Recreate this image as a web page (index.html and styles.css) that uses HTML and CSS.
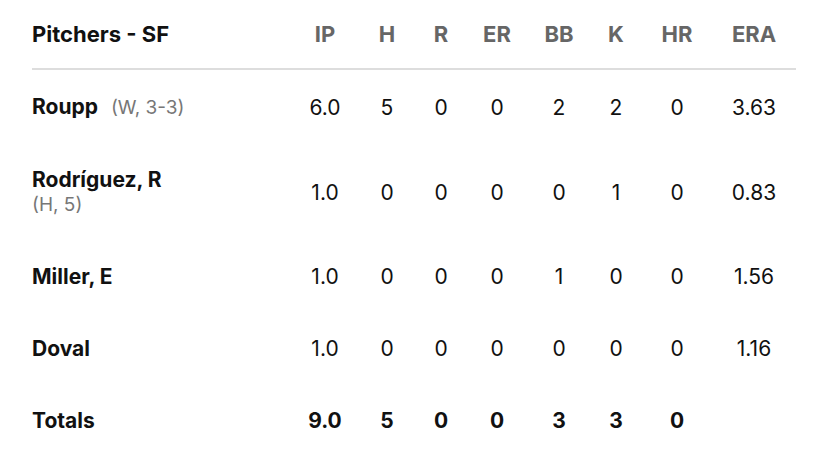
FILE: index.html
```html
<!DOCTYPE html>
<html lang="en">
<head>
<meta charset="UTF-8">
<meta name="viewport" content="width=device-width, initial-scale=1.0">
<title>Box Score - Pitchers</title>
<link rel="stylesheet" href="styles.css">
</head>
<body>

<!-- Pitching box score table -->
<div class="box">
<div class="row head">
<div class="name">Pitchers - SF</div>
<div class="stat">IP</div>
<div class="stat">H</div>
<div class="stat">R</div>
<div class="stat">ER</div>
<div class="stat">BB</div>
<div class="stat">K</div>
<div class="stat">HR</div>
<div class="stat">ERA</div>
</div>

<div class="row">
<div class="name">Roupp <span class="note">(W, 3-3)</span></div>
<div class="stat">6.0</div>
<div class="stat">5</div>
<div class="stat">0</div>
<div class="stat">0</div>
<div class="stat">2</div>
<div class="stat">2</div>
<div class="stat">0</div>
<div class="stat">3.63</div>
</div>

<div class="row">
<div class="name">Rodríguez, R<br><span class="note block">(H, 5)</span></div>
<div class="stat">1.0</div>
<div class="stat">0</div>
<div class="stat">0</div>
<div class="stat">0</div>
<div class="stat">0</div>
<div class="stat">1</div>
<div class="stat">0</div>
<div class="stat">0.83</div>
</div>

<div class="row">
<div class="name">Miller, E</div>
<div class="stat">1.0</div>
<div class="stat">0</div>
<div class="stat">0</div>
<div class="stat">0</div>
<div class="stat">1</div>
<div class="stat">0</div>
<div class="stat">0</div>
<div class="stat">1.56</div>
</div>

<div class="row">
<div class="name">Doval</div>
<div class="stat">1.0</div>
<div class="stat">0</div>
<div class="stat">0</div>
<div class="stat">0</div>
<div class="stat">0</div>
<div class="stat">0</div>
<div class="stat">0</div>
<div class="stat">1.16</div>
</div>

<div class="row totals">
<div class="name">Totals</div>
<div class="stat">9.0</div>
<div class="stat">5</div>
<div class="stat">0</div>
<div class="stat">0</div>
<div class="stat">3</div>
<div class="stat">3</div>
<div class="stat">0</div>
<div class="stat"></div>
</div>
</div>

</body>
</html>
```

FILE: styles.css
```css
/* General styling */
body {
    font-family: Inter, Lato, sans-serif;
    background: #fff;
    color: #111;
    margin: 0;
    padding: 0 32px;
}

.box {
    width: 764px;
}

/* Each line of the table is a grid with fixed stat columns */
.row {
    display: grid;
    grid-template-columns: 260px 66px 58px 50px 62px 62px 52px 70px 84px;
    align-items: center;
    padding: 25px 0 23px;
    font-size: 21px;
    line-height: 24px;
}

.name {
    font-weight: bold;
}

.stat {
    text-align: center;
}

.note {
    font-weight: normal;
    font-size: 19px;
    color: #777;
    margin-left: 8px;
}

.note.block {
    margin-left: 0;
}

/* Header row */
.head {
    padding: 22px 0 22px;
    border-bottom: 2px solid #ddd;
    font-weight: bold;
    font-size: 22px;
}

.head .stat {
    color: #666;
}

.totals {
    font-weight: bold;
}
```
